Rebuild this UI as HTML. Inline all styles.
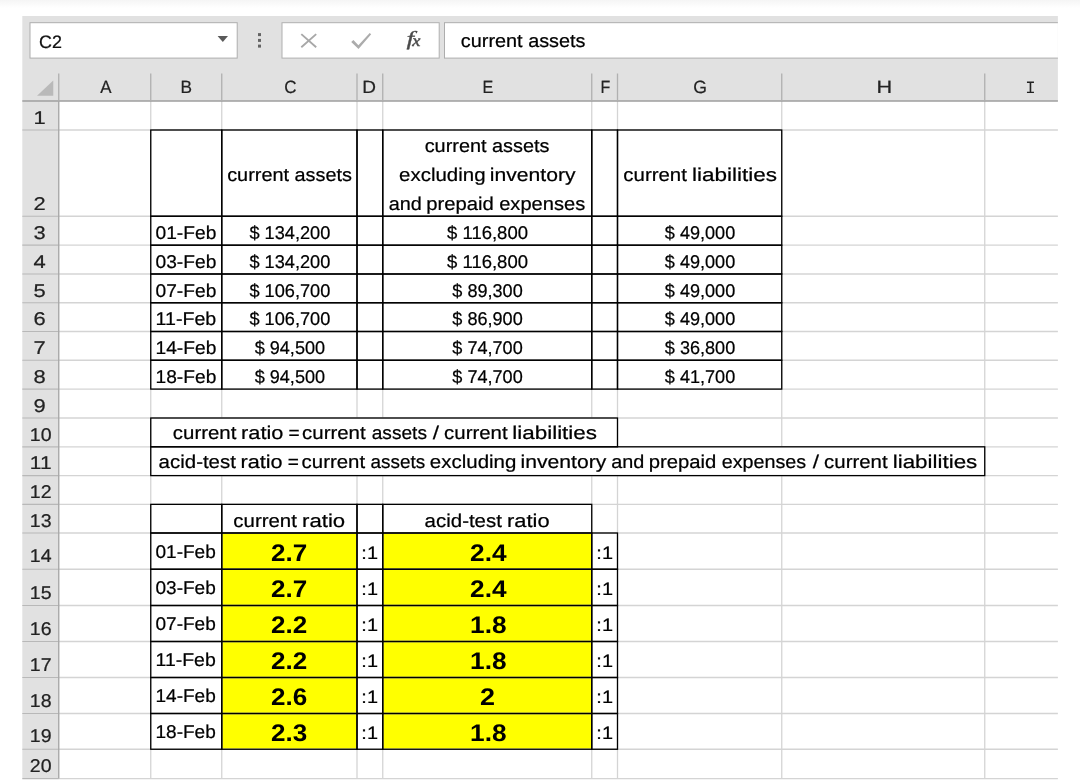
<!DOCTYPE html>
<html lang="en"><head><meta charset="utf-8"><title>Excel - current ratio and acid-test ratio</title>
<style>
html,body{margin:0;padding:0;background:#fff;}
body{width:1080px;height:783px;overflow:hidden;position:relative;font-family:"Liberation Sans",Arial,sans-serif;}
#topshade{position:absolute;left:0;top:0;width:1080px;height:8px;background:linear-gradient(#f5f5f5,#ffffff);}
svg{position:absolute;left:0;top:0;display:block;filter:blur(0.35px);}
svg text{font-family:"Liberation Sans",Arial,sans-serif;}
</style></head><body>
<div id="topshade"></div>
<svg width="1080" height="783" viewBox="0 0 1080 783" text-rendering="geometricPrecision">
<rect x="22.30" y="16.00" width="1035.60" height="85.10" fill="#e1e1e1" />
<rect x="30.00" y="22.70" width="207.20" height="35.40" fill="#fff" stroke="#adadad" stroke-width="1"/>
<text x="38.99" y="47.75" font-size="18" stroke="#111" stroke-width="0.22" fill="#111" textLength="22.91" lengthAdjust="spacingAndGlyphs">C2</text>
<path d="M217.6 36.1 L228 36.1 L222.8 42 Z" fill="#5a5a5a"/>
<rect x="258.00" y="33.10" width="3.00" height="3.00" fill="#646464" />
<rect x="258.00" y="38.90" width="3.00" height="3.00" fill="#646464" />
<rect x="258.00" y="44.60" width="3.00" height="3.00" fill="#646464" />
<rect x="282.00" y="22.70" width="157.20" height="35.40" fill="#fff" stroke="#b0b0b0" stroke-width="1"/>
<path d="M301.3 34.1 L316.2 47.3 M316.2 34.1 L301.3 47.3" stroke="#a8a8a8" stroke-width="1.9" fill="none"/>
<path d="M351.2 41.9 L358.5 49.1 L371.2 34.3 L369.7 33.1 L358.4 45.2 L353.4 39.9 Z" fill="#acacac"/>
<text y="44.8" style="font-family:'Liberation Serif','Times New Roman',serif;font-style:italic" fill="#4a4a4a" stroke="#4a4a4a"><tspan x="406.6" font-size="20" stroke-width="0.3" textLength="7.6" lengthAdjust="spacingAndGlyphs">f</tspan><tspan x="412.3" dy="1.5" font-size="16.5" stroke-width="0.45" textLength="8.2" lengthAdjust="spacingAndGlyphs">x</tspan></text>
<rect x="444.50" y="22.70" width="613.40" height="35.40" fill="#fff" />
<line x1="444.00" y1="22.70" x2="1057.90" y2="22.70" stroke="#adadad" stroke-width="1"/>
<line x1="444.00" y1="58.10" x2="1057.90" y2="58.10" stroke="#adadad" stroke-width="1"/>
<line x1="444.50" y1="22.70" x2="444.50" y2="58.10" stroke="#adadad" stroke-width="1"/>
<text x="460.86" y="47.00" font-size="18.5" stroke="#000" stroke-width="0.22" fill="#000" textLength="124.66" lengthAdjust="spacingAndGlyphs">current assets</text>
<rect x="58.75" y="101.10" width="999.15" height="677.50" fill="#fff" />
<rect x="22.30" y="101.10" width="36.45" height="677.50" fill="#e1e1e1" />
<rect x="221.75" y="533.00" width="135.25" height="216.25" fill="#ffff00" />
<rect x="382.75" y="533.00" width="209.00" height="216.25" fill="#ffff00" />
<line x1="150.75" y1="101.10" x2="150.75" y2="778.60" stroke="#d4d4d4" stroke-width="1.3"/>
<line x1="221.75" y1="101.10" x2="221.75" y2="418.00" stroke="#d4d4d4" stroke-width="1.3"/>
<line x1="221.75" y1="475.60" x2="221.75" y2="778.60" stroke="#d4d4d4" stroke-width="1.3"/>
<line x1="357.00" y1="101.10" x2="357.00" y2="418.00" stroke="#d4d4d4" stroke-width="1.3"/>
<line x1="357.00" y1="475.60" x2="357.00" y2="778.60" stroke="#d4d4d4" stroke-width="1.3"/>
<line x1="382.75" y1="101.10" x2="382.75" y2="418.00" stroke="#d4d4d4" stroke-width="1.3"/>
<line x1="382.75" y1="475.60" x2="382.75" y2="778.60" stroke="#d4d4d4" stroke-width="1.3"/>
<line x1="591.75" y1="101.10" x2="591.75" y2="418.00" stroke="#d4d4d4" stroke-width="1.3"/>
<line x1="591.75" y1="475.60" x2="591.75" y2="778.60" stroke="#d4d4d4" stroke-width="1.3"/>
<line x1="617.50" y1="101.10" x2="617.50" y2="446.80" stroke="#d4d4d4" stroke-width="1.3"/>
<line x1="617.50" y1="475.60" x2="617.50" y2="778.60" stroke="#d4d4d4" stroke-width="1.3"/>
<line x1="781.75" y1="101.10" x2="781.75" y2="446.80" stroke="#d4d4d4" stroke-width="1.3"/>
<line x1="781.75" y1="475.60" x2="781.75" y2="778.60" stroke="#d4d4d4" stroke-width="1.3"/>
<line x1="984.75" y1="101.10" x2="984.75" y2="778.60" stroke="#d4d4d4" stroke-width="1.3"/>
<line x1="58.75" y1="130.00" x2="1057.90" y2="130.00" stroke="#d4d4d4" stroke-width="1.3"/>
<line x1="22.30" y1="130.00" x2="58.75" y2="130.00" stroke="#b8b8b8" stroke-width="1.2"/>
<line x1="58.75" y1="216.25" x2="1057.90" y2="216.25" stroke="#d4d4d4" stroke-width="1.3"/>
<line x1="22.30" y1="216.25" x2="58.75" y2="216.25" stroke="#b8b8b8" stroke-width="1.2"/>
<line x1="58.75" y1="245.20" x2="1057.90" y2="245.20" stroke="#d4d4d4" stroke-width="1.3"/>
<line x1="22.30" y1="245.20" x2="58.75" y2="245.20" stroke="#b8b8b8" stroke-width="1.2"/>
<line x1="58.75" y1="274.00" x2="1057.90" y2="274.00" stroke="#d4d4d4" stroke-width="1.3"/>
<line x1="22.30" y1="274.00" x2="58.75" y2="274.00" stroke="#b8b8b8" stroke-width="1.2"/>
<line x1="58.75" y1="302.75" x2="1057.90" y2="302.75" stroke="#d4d4d4" stroke-width="1.3"/>
<line x1="22.30" y1="302.75" x2="58.75" y2="302.75" stroke="#b8b8b8" stroke-width="1.2"/>
<line x1="58.75" y1="331.50" x2="1057.90" y2="331.50" stroke="#d4d4d4" stroke-width="1.3"/>
<line x1="22.30" y1="331.50" x2="58.75" y2="331.50" stroke="#b8b8b8" stroke-width="1.2"/>
<line x1="58.75" y1="360.25" x2="1057.90" y2="360.25" stroke="#d4d4d4" stroke-width="1.3"/>
<line x1="22.30" y1="360.25" x2="58.75" y2="360.25" stroke="#b8b8b8" stroke-width="1.2"/>
<line x1="58.75" y1="389.10" x2="1057.90" y2="389.10" stroke="#d4d4d4" stroke-width="1.3"/>
<line x1="22.30" y1="389.10" x2="58.75" y2="389.10" stroke="#b8b8b8" stroke-width="1.2"/>
<line x1="58.75" y1="418.00" x2="1057.90" y2="418.00" stroke="#d4d4d4" stroke-width="1.3"/>
<line x1="22.30" y1="418.00" x2="58.75" y2="418.00" stroke="#b8b8b8" stroke-width="1.2"/>
<line x1="58.75" y1="446.80" x2="1057.90" y2="446.80" stroke="#d4d4d4" stroke-width="1.3"/>
<line x1="22.30" y1="446.80" x2="58.75" y2="446.80" stroke="#b8b8b8" stroke-width="1.2"/>
<line x1="58.75" y1="475.60" x2="1057.90" y2="475.60" stroke="#d4d4d4" stroke-width="1.3"/>
<line x1="22.30" y1="475.60" x2="58.75" y2="475.60" stroke="#b8b8b8" stroke-width="1.2"/>
<line x1="58.75" y1="504.35" x2="1057.90" y2="504.35" stroke="#d4d4d4" stroke-width="1.3"/>
<line x1="22.30" y1="504.35" x2="58.75" y2="504.35" stroke="#b8b8b8" stroke-width="1.2"/>
<line x1="58.75" y1="533.00" x2="1057.90" y2="533.00" stroke="#d4d4d4" stroke-width="1.3"/>
<line x1="22.30" y1="533.00" x2="58.75" y2="533.00" stroke="#b8b8b8" stroke-width="1.2"/>
<line x1="58.75" y1="569.25" x2="1057.90" y2="569.25" stroke="#d4d4d4" stroke-width="1.3"/>
<line x1="22.30" y1="569.25" x2="58.75" y2="569.25" stroke="#b8b8b8" stroke-width="1.2"/>
<line x1="58.75" y1="605.50" x2="1057.90" y2="605.50" stroke="#d4d4d4" stroke-width="1.3"/>
<line x1="22.30" y1="605.50" x2="58.75" y2="605.50" stroke="#b8b8b8" stroke-width="1.2"/>
<line x1="58.75" y1="641.50" x2="1057.90" y2="641.50" stroke="#d4d4d4" stroke-width="1.3"/>
<line x1="22.30" y1="641.50" x2="58.75" y2="641.50" stroke="#b8b8b8" stroke-width="1.2"/>
<line x1="58.75" y1="677.50" x2="1057.90" y2="677.50" stroke="#d4d4d4" stroke-width="1.3"/>
<line x1="22.30" y1="677.50" x2="58.75" y2="677.50" stroke="#b8b8b8" stroke-width="1.2"/>
<line x1="58.75" y1="713.50" x2="1057.90" y2="713.50" stroke="#d4d4d4" stroke-width="1.3"/>
<line x1="22.30" y1="713.50" x2="58.75" y2="713.50" stroke="#b8b8b8" stroke-width="1.2"/>
<line x1="58.75" y1="749.25" x2="1057.90" y2="749.25" stroke="#d4d4d4" stroke-width="1.3"/>
<line x1="22.30" y1="749.25" x2="58.75" y2="749.25" stroke="#b8b8b8" stroke-width="1.2"/>
<line x1="58.75" y1="778.60" x2="1057.90" y2="778.60" stroke="#d4d4d4" stroke-width="1.3"/>
<line x1="22.30" y1="778.60" x2="58.75" y2="778.60" stroke="#b8b8b8" stroke-width="1.2"/>
<line x1="22.30" y1="101.10" x2="1057.90" y2="101.10" stroke="#9e9e9e" stroke-width="1.5"/>
<line x1="58.75" y1="101.10" x2="58.75" y2="778.60" stroke="#a8a8a8" stroke-width="1.4"/>
<line x1="58.75" y1="73.50" x2="58.75" y2="101.10" stroke="#b0b0b0" stroke-width="1.3"/>
<line x1="150.75" y1="73.50" x2="150.75" y2="101.10" stroke="#b0b0b0" stroke-width="1.3"/>
<line x1="221.75" y1="73.50" x2="221.75" y2="101.10" stroke="#b0b0b0" stroke-width="1.3"/>
<line x1="357.00" y1="73.50" x2="357.00" y2="101.10" stroke="#b0b0b0" stroke-width="1.3"/>
<line x1="382.75" y1="73.50" x2="382.75" y2="101.10" stroke="#b0b0b0" stroke-width="1.3"/>
<line x1="591.75" y1="73.50" x2="591.75" y2="101.10" stroke="#b0b0b0" stroke-width="1.3"/>
<line x1="617.50" y1="73.50" x2="617.50" y2="101.10" stroke="#b0b0b0" stroke-width="1.3"/>
<line x1="781.75" y1="73.50" x2="781.75" y2="101.10" stroke="#b0b0b0" stroke-width="1.3"/>
<line x1="984.75" y1="73.50" x2="984.75" y2="101.10" stroke="#b0b0b0" stroke-width="1.3"/>
<path d="M37 95.75 L53.25 95.75 L53.25 80.5 Z" fill="#b9b9b9"/>
<text x="100.37" y="93.20" font-size="17.8" stroke="#222" stroke-width="0.22" fill="#222" textLength="11.27" lengthAdjust="spacingAndGlyphs">A</text>
<text x="180.48" y="93.20" font-size="17.8" stroke="#222" stroke-width="0.22" fill="#222" textLength="11.53" lengthAdjust="spacingAndGlyphs">B</text>
<text x="284.14" y="93.20" font-size="17.8" stroke="#222" stroke-width="0.22" fill="#222" textLength="12.26" lengthAdjust="spacingAndGlyphs">C</text>
<text x="362.19" y="93.20" font-size="17.8" stroke="#222" stroke-width="0.22" fill="#222" textLength="13.72" lengthAdjust="spacingAndGlyphs">D</text>
<text x="482.43" y="93.20" font-size="17.8" stroke="#222" stroke-width="0.22" fill="#222" textLength="10.77" lengthAdjust="spacingAndGlyphs">E</text>
<text x="600.52" y="93.20" font-size="17.8" stroke="#222" stroke-width="0.22" fill="#222" textLength="9.79" lengthAdjust="spacingAndGlyphs">F</text>
<text x="693.36" y="93.20" font-size="17.8" stroke="#222" stroke-width="0.22" fill="#222" textLength="13.70" lengthAdjust="spacingAndGlyphs">G</text>
<text x="876.40" y="93.20" font-size="17.8" stroke="#222" stroke-width="0.22" fill="#222" textLength="15.68" lengthAdjust="spacingAndGlyphs">H</text>
<text x="1030.4" y="93.2" font-size="17.4" text-anchor="middle" style="font-family:'Liberation Mono',monospace" fill="#222">I</text>
<text x="33.50" y="123.80" font-size="18.5" stroke="#222" stroke-width="0.22" fill="#222" textLength="12.21" lengthAdjust="spacingAndGlyphs">1</text>
<text x="33.50" y="210.05" font-size="18.5" stroke="#222" stroke-width="0.22" fill="#222" textLength="12.21" lengthAdjust="spacingAndGlyphs">2</text>
<text x="33.50" y="239.00" font-size="18.5" stroke="#222" stroke-width="0.22" fill="#222" textLength="12.21" lengthAdjust="spacingAndGlyphs">3</text>
<text x="33.50" y="267.80" font-size="18.5" stroke="#222" stroke-width="0.22" fill="#222" textLength="12.21" lengthAdjust="spacingAndGlyphs">4</text>
<text x="33.50" y="296.55" font-size="18.5" stroke="#222" stroke-width="0.22" fill="#222" textLength="12.21" lengthAdjust="spacingAndGlyphs">5</text>
<text x="33.50" y="325.30" font-size="18.5" stroke="#222" stroke-width="0.22" fill="#222" textLength="12.21" lengthAdjust="spacingAndGlyphs">6</text>
<text x="33.50" y="354.05" font-size="18.5" stroke="#222" stroke-width="0.22" fill="#222" textLength="12.21" lengthAdjust="spacingAndGlyphs">7</text>
<text x="33.50" y="382.90" font-size="18.5" stroke="#222" stroke-width="0.22" fill="#222" textLength="12.21" lengthAdjust="spacingAndGlyphs">8</text>
<text x="33.50" y="411.80" font-size="18.5" stroke="#222" stroke-width="0.22" fill="#222" textLength="12.21" lengthAdjust="spacingAndGlyphs">9</text>
<text x="29.81" y="440.60" font-size="18.5" stroke="#222" stroke-width="0.22" fill="#222" textLength="21.75" lengthAdjust="spacingAndGlyphs">10</text>
<text x="29.81" y="469.40" font-size="18.5" stroke="#222" stroke-width="0.22" fill="#222" textLength="21.75" lengthAdjust="spacingAndGlyphs">11</text>
<text x="29.81" y="498.15" font-size="18.5" stroke="#222" stroke-width="0.22" fill="#222" textLength="21.75" lengthAdjust="spacingAndGlyphs">12</text>
<text x="29.81" y="526.80" font-size="18.5" stroke="#222" stroke-width="0.22" fill="#222" textLength="21.75" lengthAdjust="spacingAndGlyphs">13</text>
<text x="29.81" y="562.35" font-size="18.5" stroke="#222" stroke-width="0.22" fill="#222" textLength="21.75" lengthAdjust="spacingAndGlyphs">14</text>
<text x="29.81" y="598.60" font-size="18.5" stroke="#222" stroke-width="0.22" fill="#222" textLength="21.75" lengthAdjust="spacingAndGlyphs">15</text>
<text x="29.81" y="634.60" font-size="18.5" stroke="#222" stroke-width="0.22" fill="#222" textLength="21.75" lengthAdjust="spacingAndGlyphs">16</text>
<text x="29.81" y="670.60" font-size="18.5" stroke="#222" stroke-width="0.22" fill="#222" textLength="21.75" lengthAdjust="spacingAndGlyphs">17</text>
<text x="29.81" y="706.60" font-size="18.5" stroke="#222" stroke-width="0.22" fill="#222" textLength="21.75" lengthAdjust="spacingAndGlyphs">18</text>
<text x="29.81" y="742.35" font-size="18.5" stroke="#222" stroke-width="0.22" fill="#222" textLength="21.75" lengthAdjust="spacingAndGlyphs">19</text>
<text x="29.81" y="771.70" font-size="18.5" stroke="#222" stroke-width="0.22" fill="#222" textLength="21.75" lengthAdjust="spacingAndGlyphs">20</text>
<rect x="150.75" y="130.00" width="71.00" height="86.25" fill="none" stroke="#000" stroke-width="1.3"/>
<rect x="150.75" y="216.25" width="71.00" height="28.95" fill="none" stroke="#000" stroke-width="1.3"/>
<rect x="150.75" y="245.20" width="71.00" height="28.80" fill="none" stroke="#000" stroke-width="1.3"/>
<rect x="150.75" y="274.00" width="71.00" height="28.75" fill="none" stroke="#000" stroke-width="1.3"/>
<rect x="150.75" y="302.75" width="71.00" height="28.75" fill="none" stroke="#000" stroke-width="1.3"/>
<rect x="150.75" y="331.50" width="71.00" height="28.75" fill="none" stroke="#000" stroke-width="1.3"/>
<rect x="150.75" y="360.25" width="71.00" height="28.85" fill="none" stroke="#000" stroke-width="1.3"/>
<rect x="221.75" y="130.00" width="135.25" height="86.25" fill="none" stroke="#000" stroke-width="1.3"/>
<rect x="221.75" y="216.25" width="135.25" height="28.95" fill="none" stroke="#000" stroke-width="1.3"/>
<rect x="221.75" y="245.20" width="135.25" height="28.80" fill="none" stroke="#000" stroke-width="1.3"/>
<rect x="221.75" y="274.00" width="135.25" height="28.75" fill="none" stroke="#000" stroke-width="1.3"/>
<rect x="221.75" y="302.75" width="135.25" height="28.75" fill="none" stroke="#000" stroke-width="1.3"/>
<rect x="221.75" y="331.50" width="135.25" height="28.75" fill="none" stroke="#000" stroke-width="1.3"/>
<rect x="221.75" y="360.25" width="135.25" height="28.85" fill="none" stroke="#000" stroke-width="1.3"/>
<rect x="357.00" y="130.00" width="25.75" height="86.25" fill="none" stroke="#000" stroke-width="1.3"/>
<rect x="357.00" y="216.25" width="25.75" height="28.95" fill="none" stroke="#000" stroke-width="1.3"/>
<rect x="357.00" y="245.20" width="25.75" height="28.80" fill="none" stroke="#000" stroke-width="1.3"/>
<rect x="357.00" y="274.00" width="25.75" height="28.75" fill="none" stroke="#000" stroke-width="1.3"/>
<rect x="357.00" y="302.75" width="25.75" height="28.75" fill="none" stroke="#000" stroke-width="1.3"/>
<rect x="357.00" y="331.50" width="25.75" height="28.75" fill="none" stroke="#000" stroke-width="1.3"/>
<rect x="357.00" y="360.25" width="25.75" height="28.85" fill="none" stroke="#000" stroke-width="1.3"/>
<rect x="382.75" y="130.00" width="209.00" height="86.25" fill="none" stroke="#000" stroke-width="1.3"/>
<rect x="382.75" y="216.25" width="209.00" height="28.95" fill="none" stroke="#000" stroke-width="1.3"/>
<rect x="382.75" y="245.20" width="209.00" height="28.80" fill="none" stroke="#000" stroke-width="1.3"/>
<rect x="382.75" y="274.00" width="209.00" height="28.75" fill="none" stroke="#000" stroke-width="1.3"/>
<rect x="382.75" y="302.75" width="209.00" height="28.75" fill="none" stroke="#000" stroke-width="1.3"/>
<rect x="382.75" y="331.50" width="209.00" height="28.75" fill="none" stroke="#000" stroke-width="1.3"/>
<rect x="382.75" y="360.25" width="209.00" height="28.85" fill="none" stroke="#000" stroke-width="1.3"/>
<rect x="591.75" y="130.00" width="25.75" height="86.25" fill="none" stroke="#000" stroke-width="1.3"/>
<rect x="591.75" y="216.25" width="25.75" height="28.95" fill="none" stroke="#000" stroke-width="1.3"/>
<rect x="591.75" y="245.20" width="25.75" height="28.80" fill="none" stroke="#000" stroke-width="1.3"/>
<rect x="591.75" y="274.00" width="25.75" height="28.75" fill="none" stroke="#000" stroke-width="1.3"/>
<rect x="591.75" y="302.75" width="25.75" height="28.75" fill="none" stroke="#000" stroke-width="1.3"/>
<rect x="591.75" y="331.50" width="25.75" height="28.75" fill="none" stroke="#000" stroke-width="1.3"/>
<rect x="591.75" y="360.25" width="25.75" height="28.85" fill="none" stroke="#000" stroke-width="1.3"/>
<rect x="617.50" y="130.00" width="164.25" height="86.25" fill="none" stroke="#000" stroke-width="1.3"/>
<rect x="617.50" y="216.25" width="164.25" height="28.95" fill="none" stroke="#000" stroke-width="1.3"/>
<rect x="617.50" y="245.20" width="164.25" height="28.80" fill="none" stroke="#000" stroke-width="1.3"/>
<rect x="617.50" y="274.00" width="164.25" height="28.75" fill="none" stroke="#000" stroke-width="1.3"/>
<rect x="617.50" y="302.75" width="164.25" height="28.75" fill="none" stroke="#000" stroke-width="1.3"/>
<rect x="617.50" y="331.50" width="164.25" height="28.75" fill="none" stroke="#000" stroke-width="1.3"/>
<rect x="617.50" y="360.25" width="164.25" height="28.85" fill="none" stroke="#000" stroke-width="1.3"/>
<rect x="150.75" y="418.00" width="466.75" height="28.80" fill="none" stroke="#000" stroke-width="1.3"/>
<rect x="150.75" y="446.80" width="834.00" height="28.80" fill="none" stroke="#000" stroke-width="1.3"/>
<rect x="150.75" y="504.35" width="71.00" height="28.65" fill="none" stroke="#000" stroke-width="1.3"/>
<rect x="221.75" y="504.35" width="135.25" height="28.65" fill="none" stroke="#000" stroke-width="1.3"/>
<rect x="357.00" y="504.35" width="25.75" height="28.65" fill="none" stroke="#000" stroke-width="1.3"/>
<rect x="382.75" y="504.35" width="209.00" height="28.65" fill="none" stroke="#000" stroke-width="1.3"/>
<rect x="150.75" y="533.00" width="71.00" height="36.25" fill="none" stroke="#000" stroke-width="1.3"/>
<rect x="150.75" y="569.25" width="71.00" height="36.25" fill="none" stroke="#000" stroke-width="1.3"/>
<rect x="150.75" y="605.50" width="71.00" height="36.00" fill="none" stroke="#000" stroke-width="1.3"/>
<rect x="150.75" y="641.50" width="71.00" height="36.00" fill="none" stroke="#000" stroke-width="1.3"/>
<rect x="150.75" y="677.50" width="71.00" height="36.00" fill="none" stroke="#000" stroke-width="1.3"/>
<rect x="150.75" y="713.50" width="71.00" height="35.75" fill="none" stroke="#000" stroke-width="1.3"/>
<rect x="221.75" y="533.00" width="135.25" height="36.25" fill="none" stroke="#000" stroke-width="1.3"/>
<rect x="221.75" y="569.25" width="135.25" height="36.25" fill="none" stroke="#000" stroke-width="1.3"/>
<rect x="221.75" y="605.50" width="135.25" height="36.00" fill="none" stroke="#000" stroke-width="1.3"/>
<rect x="221.75" y="641.50" width="135.25" height="36.00" fill="none" stroke="#000" stroke-width="1.3"/>
<rect x="221.75" y="677.50" width="135.25" height="36.00" fill="none" stroke="#000" stroke-width="1.3"/>
<rect x="221.75" y="713.50" width="135.25" height="35.75" fill="none" stroke="#000" stroke-width="1.3"/>
<rect x="357.00" y="533.00" width="25.75" height="36.25" fill="none" stroke="#000" stroke-width="1.3"/>
<rect x="357.00" y="569.25" width="25.75" height="36.25" fill="none" stroke="#000" stroke-width="1.3"/>
<rect x="357.00" y="605.50" width="25.75" height="36.00" fill="none" stroke="#000" stroke-width="1.3"/>
<rect x="357.00" y="641.50" width="25.75" height="36.00" fill="none" stroke="#000" stroke-width="1.3"/>
<rect x="357.00" y="677.50" width="25.75" height="36.00" fill="none" stroke="#000" stroke-width="1.3"/>
<rect x="357.00" y="713.50" width="25.75" height="35.75" fill="none" stroke="#000" stroke-width="1.3"/>
<rect x="382.75" y="533.00" width="209.00" height="36.25" fill="none" stroke="#000" stroke-width="1.3"/>
<rect x="382.75" y="569.25" width="209.00" height="36.25" fill="none" stroke="#000" stroke-width="1.3"/>
<rect x="382.75" y="605.50" width="209.00" height="36.00" fill="none" stroke="#000" stroke-width="1.3"/>
<rect x="382.75" y="641.50" width="209.00" height="36.00" fill="none" stroke="#000" stroke-width="1.3"/>
<rect x="382.75" y="677.50" width="209.00" height="36.00" fill="none" stroke="#000" stroke-width="1.3"/>
<rect x="382.75" y="713.50" width="209.00" height="35.75" fill="none" stroke="#000" stroke-width="1.3"/>
<rect x="591.75" y="533.00" width="25.75" height="36.25" fill="none" stroke="#000" stroke-width="1.3"/>
<rect x="591.75" y="569.25" width="25.75" height="36.25" fill="none" stroke="#000" stroke-width="1.3"/>
<rect x="591.75" y="605.50" width="25.75" height="36.00" fill="none" stroke="#000" stroke-width="1.3"/>
<rect x="591.75" y="641.50" width="25.75" height="36.00" fill="none" stroke="#000" stroke-width="1.3"/>
<rect x="591.75" y="677.50" width="25.75" height="36.00" fill="none" stroke="#000" stroke-width="1.3"/>
<rect x="591.75" y="713.50" width="25.75" height="35.75" fill="none" stroke="#000" stroke-width="1.3"/>
<text x="227.16" y="181.25" font-size="18.5" stroke="#000" stroke-width="0.22" fill="#000" textLength="124.81" lengthAdjust="spacingAndGlyphs">current assets</text>
<text x="424.66" y="152.00" font-size="18.5" stroke="#000" stroke-width="0.22" fill="#000" textLength="124.81" lengthAdjust="spacingAndGlyphs">current assets</text>
<text y="181.25" font-size="18.5" fill="#000" stroke="#000" stroke-width="0.22"><tspan x="399.13" textLength="86.39" lengthAdjust="spacingAndGlyphs">excluding</tspan> <tspan x="489.79" textLength="85.76" lengthAdjust="spacingAndGlyphs">inventory</tspan></text>
<text y="210.00" font-size="18.5" fill="#000" stroke="#000" stroke-width="0.22"><tspan x="388.66" textLength="33.12" lengthAdjust="spacingAndGlyphs">and</tspan> <tspan x="426.19" textLength="67.61" lengthAdjust="spacingAndGlyphs">prepaid</tspan> <tspan x="499.15" textLength="86.08" lengthAdjust="spacingAndGlyphs">expenses</tspan></text>
<text y="181.25" font-size="18.5" fill="#000" stroke="#000" stroke-width="0.22"><tspan x="623.38" textLength="63.52" lengthAdjust="spacingAndGlyphs">current</tspan> <tspan x="691.98" textLength="85.08" lengthAdjust="spacingAndGlyphs">liabilities</tspan></text>
<text x="155.55" y="239.00" font-size="18.5" stroke="#000" stroke-width="0.22" fill="#000" textLength="60.75" lengthAdjust="spacingAndGlyphs">01-Feb</text>
<text x="249.40" y="239.00" font-size="18.5" stroke="#000" stroke-width="0.22" fill="#000" textLength="80.91" lengthAdjust="spacingAndGlyphs">$ 134,200</text>
<text x="447.05" y="239.00" font-size="18.5" stroke="#000" stroke-width="0.22" fill="#000" textLength="80.91" lengthAdjust="spacingAndGlyphs">$ 116,800</text>
<text x="664.81" y="239.00" font-size="18.5" stroke="#000" stroke-width="0.22" fill="#000" textLength="70.40" lengthAdjust="spacingAndGlyphs">$ 49,000</text>
<text x="155.55" y="267.80" font-size="18.5" stroke="#000" stroke-width="0.22" fill="#000" textLength="60.75" lengthAdjust="spacingAndGlyphs">03-Feb</text>
<text x="249.40" y="267.80" font-size="18.5" stroke="#000" stroke-width="0.22" fill="#000" textLength="80.91" lengthAdjust="spacingAndGlyphs">$ 134,200</text>
<text x="447.05" y="267.80" font-size="18.5" stroke="#000" stroke-width="0.22" fill="#000" textLength="80.91" lengthAdjust="spacingAndGlyphs">$ 116,800</text>
<text x="664.81" y="267.80" font-size="18.5" stroke="#000" stroke-width="0.22" fill="#000" textLength="70.40" lengthAdjust="spacingAndGlyphs">$ 49,000</text>
<text x="155.55" y="296.55" font-size="18.5" stroke="#000" stroke-width="0.22" fill="#000" textLength="60.75" lengthAdjust="spacingAndGlyphs">07-Feb</text>
<text x="249.40" y="296.55" font-size="18.5" stroke="#000" stroke-width="0.22" fill="#000" textLength="80.91" lengthAdjust="spacingAndGlyphs">$ 106,700</text>
<text x="452.31" y="296.55" font-size="18.5" stroke="#000" stroke-width="0.22" fill="#000" textLength="70.40" lengthAdjust="spacingAndGlyphs">$ 89,300</text>
<text x="664.81" y="296.55" font-size="18.5" stroke="#000" stroke-width="0.22" fill="#000" textLength="70.40" lengthAdjust="spacingAndGlyphs">$ 49,000</text>
<text x="155.55" y="325.30" font-size="18.5" stroke="#000" stroke-width="0.22" fill="#000" textLength="60.75" lengthAdjust="spacingAndGlyphs">11-Feb</text>
<text x="249.40" y="325.30" font-size="18.5" stroke="#000" stroke-width="0.22" fill="#000" textLength="80.91" lengthAdjust="spacingAndGlyphs">$ 106,700</text>
<text x="452.31" y="325.30" font-size="18.5" stroke="#000" stroke-width="0.22" fill="#000" textLength="70.40" lengthAdjust="spacingAndGlyphs">$ 86,900</text>
<text x="664.81" y="325.30" font-size="18.5" stroke="#000" stroke-width="0.22" fill="#000" textLength="70.40" lengthAdjust="spacingAndGlyphs">$ 49,000</text>
<text x="155.55" y="354.05" font-size="18.5" stroke="#000" stroke-width="0.22" fill="#000" textLength="60.75" lengthAdjust="spacingAndGlyphs">14-Feb</text>
<text x="254.66" y="354.05" font-size="18.5" stroke="#000" stroke-width="0.22" fill="#000" textLength="70.40" lengthAdjust="spacingAndGlyphs">$ 94,500</text>
<text x="452.31" y="354.05" font-size="18.5" stroke="#000" stroke-width="0.22" fill="#000" textLength="70.40" lengthAdjust="spacingAndGlyphs">$ 74,700</text>
<text x="664.81" y="354.05" font-size="18.5" stroke="#000" stroke-width="0.22" fill="#000" textLength="70.40" lengthAdjust="spacingAndGlyphs">$ 36,800</text>
<text x="155.55" y="382.90" font-size="18.5" stroke="#000" stroke-width="0.22" fill="#000" textLength="60.75" lengthAdjust="spacingAndGlyphs">18-Feb</text>
<text x="254.66" y="382.90" font-size="18.5" stroke="#000" stroke-width="0.22" fill="#000" textLength="70.40" lengthAdjust="spacingAndGlyphs">$ 94,500</text>
<text x="452.31" y="382.90" font-size="18.5" stroke="#000" stroke-width="0.22" fill="#000" textLength="70.40" lengthAdjust="spacingAndGlyphs">$ 74,700</text>
<text x="664.81" y="382.90" font-size="18.5" stroke="#000" stroke-width="0.22" fill="#000" textLength="70.40" lengthAdjust="spacingAndGlyphs">$ 41,700</text>
<text y="438.60" font-size="18.5" fill="#000" stroke="#000" stroke-width="0.22"><tspan x="172.88" textLength="63.52" lengthAdjust="spacingAndGlyphs">current</tspan> <tspan x="241.05" textLength="42.36" lengthAdjust="spacingAndGlyphs">ratio</tspan> <tspan x="288.57" textLength="11.12" lengthAdjust="spacingAndGlyphs">=</tspan> <tspan x="302.13" textLength="63.52" lengthAdjust="spacingAndGlyphs">current</tspan> <tspan x="371.69" textLength="55.25" lengthAdjust="spacingAndGlyphs">assets</tspan> <tspan x="432.74" textLength="6.27" lengthAdjust="spacingAndGlyphs">/</tspan> <tspan x="444.13" textLength="63.52" lengthAdjust="spacingAndGlyphs">current</tspan> <tspan x="512.24" textLength="84.82" lengthAdjust="spacingAndGlyphs">liabilities</tspan></text>
<text y="467.50" font-size="18.5" fill="#000" stroke="#000" stroke-width="0.22"><tspan x="158.63" textLength="77.27" lengthAdjust="spacingAndGlyphs">acid-test</tspan> <tspan x="240.56" textLength="42.10" lengthAdjust="spacingAndGlyphs">ratio</tspan> <tspan x="287.82" textLength="11.12" lengthAdjust="spacingAndGlyphs">=</tspan> <tspan x="301.63" textLength="63.52" lengthAdjust="spacingAndGlyphs">current</tspan> <tspan x="370.45" textLength="54.74" lengthAdjust="spacingAndGlyphs">assets</tspan> <tspan x="429.88" textLength="86.44" lengthAdjust="spacingAndGlyphs">excluding</tspan> <tspan x="520.59" textLength="85.70" lengthAdjust="spacingAndGlyphs">inventory</tspan> <tspan x="611.16" textLength="33.12" lengthAdjust="spacingAndGlyphs">and</tspan> <tspan x="648.69" textLength="67.61" lengthAdjust="spacingAndGlyphs">prepaid</tspan> <tspan x="721.66" textLength="84.55" lengthAdjust="spacingAndGlyphs">expenses</tspan> <tspan x="812.74" textLength="6.27" lengthAdjust="spacingAndGlyphs">/</tspan> <tspan x="824.13" textLength="63.52" lengthAdjust="spacingAndGlyphs">current</tspan> <tspan x="892.74" textLength="84.57" lengthAdjust="spacingAndGlyphs">liabilities</tspan></text>
<text y="527.00" font-size="18.5" fill="#000" stroke="#000" stroke-width="0.22"><tspan x="233.38" textLength="63.52" lengthAdjust="spacingAndGlyphs">current</tspan> <tspan x="302.03" textLength="43.15" lengthAdjust="spacingAndGlyphs">ratio</tspan></text>
<text y="527.00" font-size="18.5" fill="#000" stroke="#000" stroke-width="0.22"><tspan x="424.63" textLength="77.27" lengthAdjust="spacingAndGlyphs">acid-test</tspan> <tspan x="507.04" textLength="42.63" lengthAdjust="spacingAndGlyphs">ratio</tspan></text>
<text x="155.51" y="557.85" font-size="18.5" stroke="#000" stroke-width="0.22" fill="#000" textLength="60.29" lengthAdjust="spacingAndGlyphs">01-Feb</text>
<text x="271.10" y="561.15" font-size="24" font-weight="bold" fill="#000" textLength="36.20" lengthAdjust="spacingAndGlyphs">2.7</text>
<text x="470.09" y="561.15" font-size="24" font-weight="bold" fill="#000" textLength="36.47" lengthAdjust="spacingAndGlyphs">2.4</text>
<text x="361.38" y="558.85" font-size="18" stroke="#000" stroke-width="0.22" fill="#000" textLength="16.59" lengthAdjust="spacingAndGlyphs">:1</text>
<text x="596.38" y="558.85" font-size="18" stroke="#000" stroke-width="0.22" fill="#000" textLength="16.59" lengthAdjust="spacingAndGlyphs">:1</text>
<text x="155.51" y="594.10" font-size="18.5" stroke="#000" stroke-width="0.22" fill="#000" textLength="60.29" lengthAdjust="spacingAndGlyphs">03-Feb</text>
<text x="271.10" y="597.40" font-size="24" font-weight="bold" fill="#000" textLength="36.20" lengthAdjust="spacingAndGlyphs">2.7</text>
<text x="470.09" y="597.40" font-size="24" font-weight="bold" fill="#000" textLength="36.47" lengthAdjust="spacingAndGlyphs">2.4</text>
<text x="361.38" y="595.10" font-size="18" stroke="#000" stroke-width="0.22" fill="#000" textLength="16.59" lengthAdjust="spacingAndGlyphs">:1</text>
<text x="596.38" y="595.10" font-size="18" stroke="#000" stroke-width="0.22" fill="#000" textLength="16.59" lengthAdjust="spacingAndGlyphs">:1</text>
<text x="155.51" y="630.10" font-size="18.5" stroke="#000" stroke-width="0.22" fill="#000" textLength="60.29" lengthAdjust="spacingAndGlyphs">07-Feb</text>
<text x="271.10" y="633.40" font-size="24" font-weight="bold" fill="#000" textLength="36.20" lengthAdjust="spacingAndGlyphs">2.2</text>
<text x="470.09" y="633.40" font-size="24" font-weight="bold" fill="#000" textLength="36.47" lengthAdjust="spacingAndGlyphs">1.8</text>
<text x="361.38" y="631.10" font-size="18" stroke="#000" stroke-width="0.22" fill="#000" textLength="16.59" lengthAdjust="spacingAndGlyphs">:1</text>
<text x="596.38" y="631.10" font-size="18" stroke="#000" stroke-width="0.22" fill="#000" textLength="16.59" lengthAdjust="spacingAndGlyphs">:1</text>
<text x="155.51" y="666.10" font-size="18.5" stroke="#000" stroke-width="0.22" fill="#000" textLength="60.29" lengthAdjust="spacingAndGlyphs">11-Feb</text>
<text x="271.10" y="669.40" font-size="24" font-weight="bold" fill="#000" textLength="36.20" lengthAdjust="spacingAndGlyphs">2.2</text>
<text x="470.09" y="669.40" font-size="24" font-weight="bold" fill="#000" textLength="36.47" lengthAdjust="spacingAndGlyphs">1.8</text>
<text x="361.38" y="667.10" font-size="18" stroke="#000" stroke-width="0.22" fill="#000" textLength="16.59" lengthAdjust="spacingAndGlyphs">:1</text>
<text x="596.38" y="667.10" font-size="18" stroke="#000" stroke-width="0.22" fill="#000" textLength="16.59" lengthAdjust="spacingAndGlyphs">:1</text>
<text x="155.51" y="702.10" font-size="18.5" stroke="#000" stroke-width="0.22" fill="#000" textLength="60.29" lengthAdjust="spacingAndGlyphs">14-Feb</text>
<text x="271.10" y="705.40" font-size="24" font-weight="bold" fill="#000" textLength="36.20" lengthAdjust="spacingAndGlyphs">2.6</text>
<text x="480.06" y="705.40" font-size="24" font-weight="bold" fill="#000" textLength="15.02" lengthAdjust="spacingAndGlyphs">2</text>
<text x="361.38" y="703.10" font-size="18" stroke="#000" stroke-width="0.22" fill="#000" textLength="16.59" lengthAdjust="spacingAndGlyphs">:1</text>
<text x="596.38" y="703.10" font-size="18" stroke="#000" stroke-width="0.22" fill="#000" textLength="16.59" lengthAdjust="spacingAndGlyphs">:1</text>
<text x="155.51" y="737.85" font-size="18.5" stroke="#000" stroke-width="0.22" fill="#000" textLength="60.29" lengthAdjust="spacingAndGlyphs">18-Feb</text>
<text x="271.10" y="741.15" font-size="24" font-weight="bold" fill="#000" textLength="36.20" lengthAdjust="spacingAndGlyphs">2.3</text>
<text x="470.09" y="741.15" font-size="24" font-weight="bold" fill="#000" textLength="36.47" lengthAdjust="spacingAndGlyphs">1.8</text>
<text x="361.38" y="738.85" font-size="18" stroke="#000" stroke-width="0.22" fill="#000" textLength="16.59" lengthAdjust="spacingAndGlyphs">:1</text>
<text x="596.38" y="738.85" font-size="18" stroke="#000" stroke-width="0.22" fill="#000" textLength="16.59" lengthAdjust="spacingAndGlyphs">:1</text>
</svg>
</body></html>
